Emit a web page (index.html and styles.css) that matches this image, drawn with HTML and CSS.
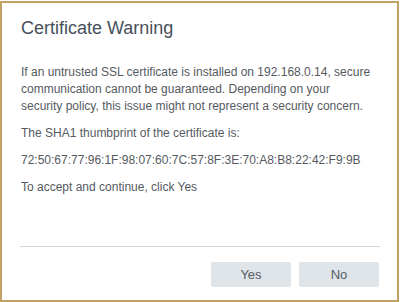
FILE: index.html
```html
<!DOCTYPE html>
<html lang="en">
<head>
  <meta charset="UTF-8" />
  <title>Certificate Warning</title>
  <link rel="stylesheet" href="styles.css">
</head>
<body>
  <div class="dialog">
    <h1 class="title">Certificate Warning</h1>
    <div class="content">
      <p>If an untrusted SSL certificate is installed on 192.168.0.14, secure communication cannot be guaranteed. Depending on your security policy, this issue might not represent a security concern.</p>
      <p>The SHA1 thumbprint of the certificate is:</p>
      <p>72:50:67:77:96:1F:98:07:60:7C:57:8F:3E:70:A8:B8:22:42:F9:9B</p>
      <p>To accept and continue, click Yes</p>
    </div>
    <div class="footer">
      <button class="btn">Yes</button>
      <button class="btn">No</button>
    </div>
  </div>
</body>
</html>
```

FILE: styles.css
```css
body {
  margin: 0;
  font-family: "Liberation Sans", Arial, sans-serif;
  background: #fff;
}
.dialog {
  box-sizing: border-box;
  width: 399px;
  height: 301px;
  margin-top: 1px;
  border: 2px solid #c2a263;
  background: #fff;
  display: flex;
  flex-direction: column;
}
.title {
  margin: 14px 0 0 19px;
  font-size: 18px;
  line-height: 22px;
  font-weight: normal;
  color: #47505a;
}
.content {
  width: 350px;
  margin: 25px 0 0 19px;
  font-size: 12px;
  line-height: 17px;
  color: #555a5f;
}
.content p {
  margin: 0 0 10px 0;
}
.footer {
  margin: auto 17px 0 18px;
  border-top: 1px solid #ccd7dc;
  padding: 15px 0 13px 0;
  display: flex;
  justify-content: flex-end;
  gap: 8px;
}
.btn {
  width: 80px;
  height: 25px;
  border: none;
  border-radius: 2px;
  background: #dfe4e8;
  color: #555c63;
  font-family: "Liberation Sans", Arial, sans-serif;
  font-size: 13px;
  padding: 0;
}
.btn:last-child {
  margin-right: 1px;
}
```
